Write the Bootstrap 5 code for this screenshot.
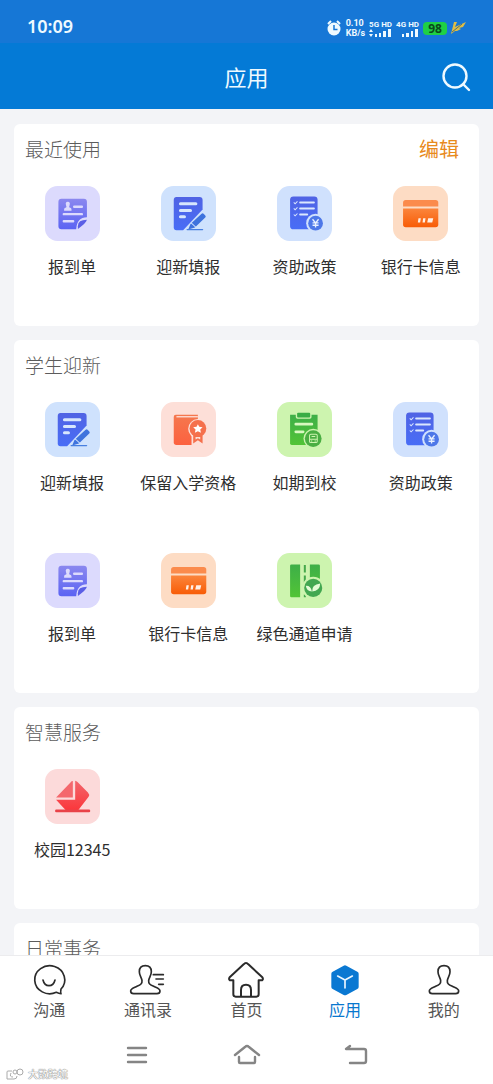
<!DOCTYPE html>
<html lang="zh-CN">
<head>
<meta charset="utf-8">
<meta name="viewport" content="width=device-width, initial-scale=1">
<title>应用</title>
<link href="https://cdn.jsdelivr.net/npm/bootstrap@5.3.0/dist/css/bootstrap.min.css" rel="stylesheet">
<style>
  body { font-family: "Noto Sans CJK SC", sans-serif; background: #f3f4f7; color: #2e2e2e; font-size: 16px; line-height: 24px; }
  button { font: inherit; }
  .statusbar { background: #1677d6; color: #effaff; height: 43px; padding: 10px 27px 0 27px; font-family: "Noto Sans", sans-serif; }
  .clock { font-size: 18px; font-weight: 600; }
  .tiny { font-family: Roboto, sans-serif; font-size: 9px; line-height: 10px; font-weight: 700; }
  .signal-label { font-family: Roboto, sans-serif; font-size: 8px; line-height: 9px; font-weight: 700; white-space: nowrap; }
  .battery { background: #1fd044; color: #0a4a1c; font-size: 12px; line-height: 13px; font-weight: 700; border-radius: 4px; width: 24px; text-align: center; }
  .appbar { background: #047ad6; color: #effaff; height: 66px; }
  .appbar h1 { font-size: 22px; line-height: 32px; font-weight: 400; }
  .search-btn { right: 22px; top: 19px; width: 30px; height: 30px; color: #effaff; }
  main { padding: 15px 14px 0; overflow-y: auto; scrollbar-width: none; min-height: 0; }
  main::-webkit-scrollbar { display: none; }
  .panel { background: #fff; border-radius: 6px; margin-bottom: 14px; }
  .panel-head { height: 62px; padding: 11px 20px 0 11px; }
  .panel-head h2 { font-size: 19px; line-height: 28px; font-weight: 300; color: #5c5c5c; }
  .edit-btn { font-size: 20px; line-height: 28px; color: #e88a1c; }
  .app-grid { row-gap: 11px; }
  .app-link { height: 140px; color: #2e2e2e; text-decoration: none; white-space: nowrap; }
  .app-link svg { width: 55px; height: 55px; margin-bottom: 13px; }
  .tabbar { background: #fff; border-top: 1px solid #ececee; height: 70px; padding-top: 4px; }
  .tabbar a { color: #555; text-decoration: none; line-height: 18px; }
  .tabbar a.active { color: #0877ce; }
  .tabbar svg { width: 40px; height: 40px; }
  .sysbar { background: #fff; height: 59px; padding: 0 82px; }
  .sysbar button { color: #858585; }
  .watermark { left: 6px; bottom: 3px; font-size: 10px; line-height: 14px; color: #fff; text-shadow: 0 0 1px #888, 0 0 1px #888, 0 0 1px #999; }
</style>
</head>
<body>
<svg class="d-none" aria-hidden="true">
  <symbol id="i-form" viewBox="0 0 164 164">
    <rect width="164" height="164" rx="37" fill="#dcdafd"/>
    <path d="M49 38h67q9 0 9 9v46q-30 0-32 36H49q-9 0-9-9V47q0-9 9-9z" fill="url(#gViolet)"/>
    <path d="M98 128v-8q0-19 27-19q-2 10-27 27z" fill="#5b5fe6"/>
    <path d="M57 74v-5q0-4 6-5q2-2 0-5q-3-8 1-11q4-2 8 0q4 3 1 11q-2 3 0 5q6 1 6 5v5z" fill="#dcdafd"/>
    <path d="M87 62h23M56 84h54M56 105h28" stroke="#dcdafd" stroke-width="7" stroke-linecap="round"/>
  </symbol>
  <symbol id="i-fill" viewBox="0 0 164 164">
    <rect width="164" height="164" rx="37" fill="#cfe2fd"/>
    <path d="M46 33h69q9 0 9 9v28L66 132H46q-8 0-8-9V42q0-9 8-9z" fill="url(#gBlue)"/>
    <path d="M58 53h46M58 73h30M58 92h12" stroke="#d7e6fd" stroke-width="9" stroke-linecap="round"/>
    <path d="M121 83q3-3 6 0l5 5q3 3 0 6l-31 30l-20 6l7-17z" fill="#3f73dd"/>
    <path d="M89 109l15 14" stroke="#cfe2fd" stroke-width="3"/>
    <path d="M78 130h46" stroke="#477fe0" stroke-width="4" stroke-linecap="round"/>
  </symbol>
  <symbol id="i-policy" viewBox="0 0 164 164">
    <rect width="164" height="164" rx="37" fill="#d0e1fd"/>
    <rect x="39" y="31" width="82" height="98" rx="10" fill="url(#gBlue)"/>
    <path d="M69 49h41M69 67h41M69 85h21" stroke="#dbe7fe" stroke-width="6" stroke-linecap="round"/>
    <path d="M50 49l4 4l7-7M50 67l4 4l7-7M50 85l4 4l7-7" fill="none" stroke="#dbe7fe" stroke-width="3"/>
    <circle cx="115" cy="111" r="28" fill="#d0e1fd"/><circle cx="115" cy="111" r="22" fill="#4d77e8"/>
    <path d="M106 99l9 11l9-11M115 110v14M106 110h18M106 117h18" fill="none" stroke="#e8f0ff" stroke-width="4"/>
  </symbol>
  <symbol id="i-card" viewBox="0 0 164 164">
    <rect width="164" height="164" rx="37" fill="#fddcc4"/>
    <path d="M30 61V50q0-8 8-8h89q8 0 8 8v11z" fill="#fb8b4c"/>
    <path d="M30 67h105v48q0 8-8 8H38q-8 0-8-8z" fill="url(#gOrange)"/>
    <path d="M76 96h7l-2 13h-7zM90 96h7l-2 13h-7zM105 96h15l-3 13h-15z" fill="#fff0e6"/>
  </symbol>
  <symbol id="i-keep" viewBox="0 0 164 164">
    <rect width="164" height="164" rx="37" fill="#fddfd8"/>
    <path d="M44 38h66v90H46q-8 0-8-8V45q0-7 6-7z" fill="url(#gCoral)"/>
    <path d="M46 44h64" stroke="#fddfd8" stroke-width="4"/>
    <circle cx="110" cy="80" r="29" fill="#fddfd8"/><path d="M91 94h36v36H91z" fill="#fddfd8"/>
    <path d="M96 97h28v27l-14-10l-14 10z" fill="#f5704c"/><path d="M103 104h14v8l-7-4l-7 4z" fill="#fddfd8"/>
    <circle cx="110" cy="79" r="25" fill="#f5704c"/>
    <path d="M110 66l4 8l10 1l-7 7l2 10l-9-5l-9 5l2-10l-7-7l10-1z" fill="#fff"/>
  </symbol>
  <symbol id="i-arrive" viewBox="0 0 164 164">
    <rect width="164" height="164" rx="37" fill="#cdf4af"/>
    <path d="M39 38h82v90H44q-5 0-5-5z" fill="url(#gGreen)"/>
    <path d="M56 30h47v15q0 5-5 5H61q-5 0-5-5z" fill="#cdf4af"/>
    <rect x="60" y="32" width="39" height="14" rx="3" fill="#39ad45"/>
    <path d="M56 66h48M56 89h22" stroke="#d8f8c0" stroke-width="8" stroke-linecap="round"/>
    <circle cx="108" cy="109" r="29" fill="#cdf4af"/><circle cx="108" cy="109" r="25" fill="#4aae43"/>
    <rect x="97" y="96" width="23" height="25" rx="4" fill="none" stroke="#cdf4af" stroke-width="3"/>
    <path d="M103 103h11M97 111h23M101 116h4M112 116h4" stroke="#cdf4af" stroke-width="3"/>
  </symbol>
  <symbol id="i-green" viewBox="0 0 164 164">
    <rect width="164" height="164" rx="37" fill="#cdf4af"/>
    <path d="M43 34h26v98H43q-4 0-4-4V38q0-4 4-4zM98 34h26q4 0 4 4v60H98z" fill="url(#gGreen)"/>
    <path d="M83 36v22M83 67v22M83 124v8" stroke="#45a84b" stroke-width="6"/>
    <circle cx="108" cy="104" r="33" fill="#cdf4af"/><circle cx="108" cy="104" r="27" fill="#42a750"/>
    <path d="M104 115q-16 0-18-17q15-1 18 17zM105 115q-2-21 24-24q-1 22-24 24z" fill="#e4fbd5"/>
  </symbol>
  <symbol id="i-campus" viewBox="0 0 164 164">
    <rect width="164" height="164" rx="37" fill="#fcdada"/>
    <path d="M83 36v49H33l43-45q3-4 7-4z" fill="#f4686d"/>
    <path d="M90 35q4 1 7 4l31 31q6 6 2 13l-31 40H62L33 92h57z" fill="url(#gRed)"/>
    <path d="M34 125h97" stroke="#e94248" stroke-width="8" stroke-linecap="round"/>
  </symbol>
  <symbol id="i-person" viewBox="0 0 120 120">
    <path d="M60 17c-13 0-18 8-18 18c0 12 7 17 8 27c1 9-4 12-15 17c-10 5-19 7-19 14c0 6 4 8 9 8h70c5 0 9-2 9-8c0-7-9-9-19-14c-11-5-16-8-15-17c1-10 8-15 8-27c0-10-5-18-18-18z" fill="none" stroke="#2b2b2b" stroke-width="5"/>
  </symbol>
</svg>
<svg class="position-absolute" width="0" height="0" aria-hidden="true">
  <defs>
    <linearGradient id="gViolet" x2="0" y2="1"><stop stop-color="#8b88ef"/><stop offset="1" stop-color="#5b63f3"/></linearGradient>
    <linearGradient id="gBlue" x2="0" y2="1"><stop stop-color="#5063e4"/><stop offset="1" stop-color="#486df6"/></linearGradient>
    <linearGradient id="gOrange" x2="0" y2="1"><stop stop-color="#fb853c"/><stop offset="1" stop-color="#f85c06"/></linearGradient>
    <linearGradient id="gCoral" x2="0" y2="1"><stop stop-color="#f5784e"/><stop offset="1" stop-color="#fc613f"/></linearGradient>
    <linearGradient id="gGreen" x2="0" y2="1"><stop stop-color="#3daf48"/><stop offset="1" stop-color="#52c436"/></linearGradient>
    <linearGradient id="gRed" x2="0" y2="1"><stop stop-color="#f2666c"/><stop offset="1" stop-color="#fb373b"/></linearGradient>
  </defs>
</svg>

<div class="d-flex flex-column vh-100">
  <div class="statusbar d-flex align-items-start justify-content-between flex-shrink-0">
    <span class="clock mt-1">10:09</span>
    <div class="d-flex align-items-center gap-1 pt-1 mt-1">
      <svg width="15" height="16" viewBox="0 0 15 16"><circle cx="7" cy="9" r="6.500" fill="#effaff"/><path d="M1 4l3-3M10 1l3 3" stroke="#effaff" stroke-width="2"/><path d="M7 5v4.500h3.500" fill="none" stroke="#1677d6" stroke-width="1.500"/></svg>
      <div class="tiny"><div>0.10</div><div>KB/s</div></div>
      <div class="d-flex flex-column">
        <span class="signal-label">5G HD</span>
        <svg width="23" height="8" viewBox="0 0 23 8" fill="#effaff"><path d="M0 3l2-3l2 3zM0 5h4l-2 3zM6 5h2v3H6zM10 4h2v4h-2zM14 2h3v6h-3zM19 0h3v8h-3z"/></svg>
      </div>
      <div class="d-flex flex-column align-items-end">
        <span class="signal-label">4G HD</span>
        <svg width="18" height="8" viewBox="0 0 18 8" fill="#effaff"><path d="M1 5h2v3H1zM5 4h3v4H5zM10 2h2v6h-2zM14 0h3v8h-3z"/></svg>
      </div>
      <span class="battery">98</span>
      <svg width="15" height="13" viewBox="0 0 15 13"><path d="M3 0h3L4 5L15 0l-3 5l-4 1l2 1l-4 2l-2 0L0 12z" fill="#dfbd45"/><path d="M1 10L11 2" stroke="#526f70"/></svg>
    </div>
  </div>
  <header class="appbar position-relative d-flex align-items-center justify-content-center flex-shrink-0">
    <h1 class="m-0">应用</h1>
    <button type="button" class="search-btn btn p-0 border-0 position-absolute d-flex" aria-label="搜索">
      <svg width="30" height="30" viewBox="0 0 30 30" fill="none" stroke="currentColor" stroke-width="2.400" stroke-linecap="round"><circle cx="14" cy="14" r="11.500"/><path d="M22 22l6 6"/></svg>
    </button>
  </header>

  <main class="flex-grow-1">
    <section class="panel">
      <div class="panel-head d-flex justify-content-between align-items-start">
        <h2 class="m-0">最近使用</h2>
        <button type="button" class="edit-btn btn p-0 border-0">编辑</button>
      </div>
      <div class="app-grid row row-cols-4 g-0">
        <a href="#" class="app-link col d-flex flex-column align-items-center"><svg><use href="#i-form"/></svg>报到单</a>
        <a href="#" class="app-link col d-flex flex-column align-items-center"><svg><use href="#i-fill"/></svg>迎新填报</a>
        <a href="#" class="app-link col d-flex flex-column align-items-center"><svg><use href="#i-policy"/></svg>资助政策</a>
        <a href="#" class="app-link col d-flex flex-column align-items-center"><svg><use href="#i-card"/></svg>银行卡信息</a>
      </div>
    </section>
    <section class="panel">
      <div class="panel-head"><h2 class="m-0">学生迎新</h2></div>
      <div class="app-grid row row-cols-4 g-0">
        <a href="#" class="app-link col d-flex flex-column align-items-center"><svg><use href="#i-fill"/></svg>迎新填报</a>
        <a href="#" class="app-link col d-flex flex-column align-items-center"><svg><use href="#i-keep"/></svg>保留入学资格</a>
        <a href="#" class="app-link col d-flex flex-column align-items-center"><svg><use href="#i-arrive"/></svg>如期到校</a>
        <a href="#" class="app-link col d-flex flex-column align-items-center"><svg><use href="#i-policy"/></svg>资助政策</a>
        <a href="#" class="app-link col d-flex flex-column align-items-center"><svg><use href="#i-form"/></svg>报到单</a>
        <a href="#" class="app-link col d-flex flex-column align-items-center"><svg><use href="#i-card"/></svg>银行卡信息</a>
        <a href="#" class="app-link col d-flex flex-column align-items-center"><svg><use href="#i-green"/></svg>绿色通道申请</a>
      </div>
    </section>
    <section class="panel">
      <div class="panel-head"><h2 class="m-0">智慧服务</h2></div>
      <div class="app-grid row row-cols-4 g-0">
        <a href="#" class="app-link col d-flex flex-column align-items-center"><svg><use href="#i-campus"/></svg>校园12345</a>
      </div>
    </section>
    <section class="panel">
      <div class="panel-head"><h2 class="m-0">日常事务</h2></div>
    </section>
  </main>

  <nav class="tabbar d-flex flex-shrink-0">
    <a href="#" class="col d-flex flex-column align-items-center">
      <svg viewBox="0 0 120 120" fill="none" stroke="#2b2b2b" stroke-width="5" stroke-linecap="round" stroke-linejoin="round"><path d="M96 87A45 42 0 1 0 82 97q8 4 14 4q-2-6 0-14z"/><path d="M42 60q4 17 18 17t18-17"/></svg>沟通</a>
    <a href="#" class="col d-flex flex-column align-items-center">
      <svg viewBox="0 0 120 120"><use href="#i-person" x="-8" width="120" height="120"/><path d="M76 44h30M84 57h22M92 73h14" stroke="#2b2b2b" stroke-width="5" stroke-linecap="round"/></svg>通讯录</a>
    <a href="#" class="col d-flex flex-column align-items-center">
      <svg viewBox="0 0 120 120" fill="none" stroke="#2b2b2b" stroke-width="6" stroke-linejoin="round"><path d="M60 9q-4 0-7 4L11 52q-4 6 1 9h10v42q0 7 7 7h62q7 0 7-7V61h10q5-3 1-9L67 13q-3-4-7-4z"/><path d="M45 110V90q0-16 15-16t15 16v20"/></svg>首页</a>
    <a href="#" class="active col d-flex flex-column align-items-center" aria-current="page">
      <svg viewBox="0 0 120 120"><path d="M56 17q4-2 8 0l33 18q4 2 4 6v40q0 4-4 6l-33 18q-4 2-8 0L23 87q-4-2-4-6V41q0-4 4-6z" fill="#0a78d2"/><path d="M38 48l22 12l22-12M60 60v24" fill="none" stroke="#eaf6ff" stroke-width="5" stroke-linecap="round"/></svg>应用</a>
    <a href="#" class="col d-flex flex-column align-items-center"><svg><use href="#i-person"/></svg>我的</a>
  </nav>
  <div class="sysbar position-relative d-flex align-items-center flex-shrink-0">
    <button type="button" class="btn p-0 border-0 col d-flex justify-content-center" aria-label="菜单"><svg width="22" height="20" viewBox="0 0 22 20" stroke="currentColor" stroke-width="2.400" stroke-linecap="round"><path d="M2 3h18M2 10h18M2 17h18"/></svg></button>
    <button type="button" class="btn p-0 border-0 col d-flex justify-content-center" aria-label="主屏幕"><svg width="28" height="22" viewBox="0 0 28 22" fill="none" stroke="currentColor" stroke-width="2.400" stroke-linecap="round" stroke-linejoin="round"><path d="M2 11l10-8q2-2 4 0l10 8M6 13v5q0 1 1 1h14q1 0 1-1v-5"/></svg></button>
    <button type="button" class="btn p-0 border-0 col d-flex justify-content-center" aria-label="返回"><svg width="24" height="22" viewBox="0 0 24 22" fill="none" stroke="currentColor" stroke-width="2.400" stroke-linecap="round" stroke-linejoin="round"><path d="M6 2L2 5h18q2 0 2 2v10q0 2-2 2H6"/></svg></button>
    <div class="watermark position-absolute d-flex align-items-center gap-1">
      <svg width="18" height="13" viewBox="0 0 18 13" fill="none" stroke="#aaa"><path d="M6 3H2q-1 0-1 1v7h7q3 0 3-3M5 5q-2 4 2 4"/><circle cx="9" cy="4" r="2"/><circle cx="14" cy="4" r="3"/></svg>大数跨境
    </div>
  </div>
</div>
<script src="https://cdn.jsdelivr.net/npm/bootstrap@5.3.0/dist/js/bootstrap.bundle.min.js"></script>
</body>
</html>
